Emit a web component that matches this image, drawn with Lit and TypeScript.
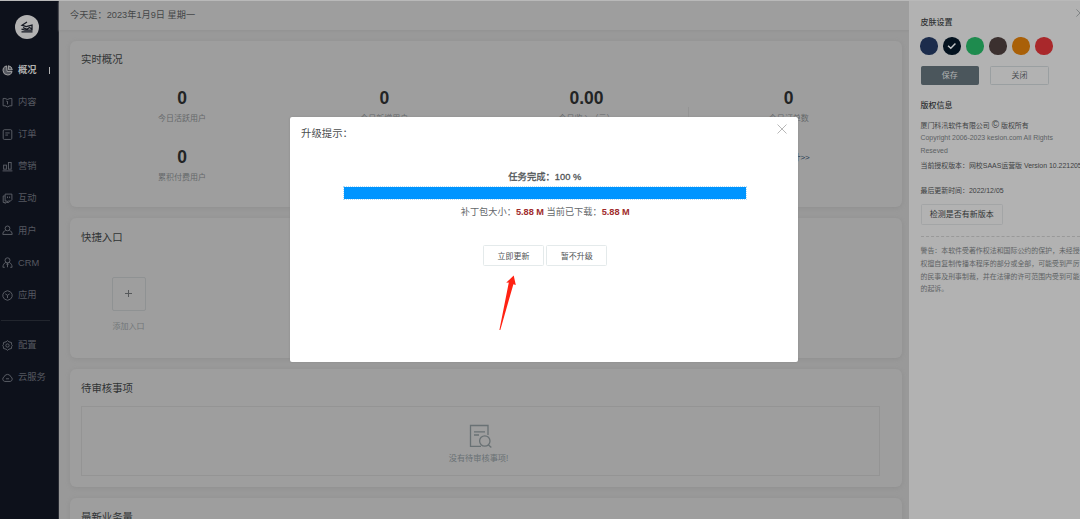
import { LitElement, html, css, svg } from "lit";
import { customElement, property } from "lit/decorators.js";

const icons: Record<string, unknown> = {
  overview: svg`<path d="M5 1A5 5 0 1 0 11 7H5.6Z"/><path d="M7 .8A5 5 0 0 1 11.2 5.2H7Z"/>`,
  content: svg`<path d="M1.2 1.6H3.2L6 2.7 8.8 1.6H10.8V9.6H8.6L6 10.8 3.4 9.6H1.2Z"/><path d="M6 4.6V8M4.6 4.4L6 5"/>`,
  order: svg`<rect x="1.3" y=".8" width="9.4" height="10.6" rx="1.3"/><path d="M3.6 4.3H8.4M3.6 6.6H6.6"/>`,
  sales: svg`<path d="M.6 10.8H11.4"/><rect x="1.8" y="4.5" width="3" height="4.4"/><rect x="7" y="1.6" width="3" height="7.3"/>`,
  chat: svg`<path d="M3.4 1.2H10.8V7.2L9.2 8.8H7L5.8 9.8V8.8H3.4Z"/><path d="M3 3.2H1.3V10.3H3.2V11.4L4.6 10.3H7.4L8.6 9M6 3.8V5.6M8.3 3.8V5.6"/>`,
  user: svg`<circle cx="6" cy="3.7" r="2.6"/><path d="M3.9 5.9C2 6.6.9 8 .9 10.3H11.1C11.1 8 10 6.6 8.1 5.9"/>`,
  crm: svg`<circle cx="6" cy="3.6" r="2.7"/><path d="M4.2 5.8C2.2 6.8 1 8.6 1 11.2H3M7.8 5.8C9.8 6.8 11 8.6 11 11.2H9M6 6.5V11.2M4.6 8L6 6.8 7.4 8"/>`,
  apps: svg`<path d="M6 .8L9.2 2 11 4.6V7.4L9.2 10 6 11.2 2.8 10 1 7.4V4.6L2.8 2Z"/><path d="M3.6 4.2L6 5.8 8.4 4.2M6 5.8V8.8"/>`,
  config: svg`<path d="M6 .7L7.6 2 10.4 2.8V4.8L11.2 6 10.4 7.4V9.2L7.6 10 6 11.3 4.4 10 1.6 9.2V7.4L.8 6 1.6 4.8V2.8L4.4 2Z"/><circle cx="6" cy="6" r="1.8"/>`,
  cloud: svg`<path d="M3 10.3A2.7 2.7 0 0 1 2.4 5.2 3.8 3.8 0 0 1 9.6 5.2 2.7 2.7 0 0 1 9 10.3Z"/><path d="M4.3 7.4H7.7"/>`,
};

@customElement("nav-item")
class NavItem extends LitElement {
  @property() icon = "";
  @property() label = "";
  @property({ type: Boolean, reflect: true }) active = false;
  static styles = css`
    :host { display: flex; align-items: center; height: 32.15px; padding-left: 2px; color: #555860; font-size: 9.3px; }
    svg { width: 11px; height: 11px; margin-right: 5px; fill: none; stroke: #5f626a; stroke-width: 1; }
    span { padding-top: 1px; }
    :host([active]) { color: #b1b1b1; font-weight: 700; }
    :host([active]) svg { stroke: #aaa; fill: #555860; }
    .mark { width: 1px; height: 7px; margin: 0 8px 0 auto; background: #b2b2b2; }
  `;
  render() {
    return html`<svg viewBox="0 0 12 12">${icons[this.icon]}</svg><span>${this.label}</span>${this.active ? html`<i class="mark"></i>` : ""}`;
  }
}

@customElement("app-root")
class AppRoot extends LitElement {
  static styles = css`
    * { box-sizing: border-box; }
    :host { display: flex; box-sizing: border-box; position: relative; width: 1080px; height: 519px; overflow: hidden; border-top: 1px solid #b9b9b9;
      background: #999; color: #3c3f40; font-family: "Liberation Sans", "Noto Sans CJK SC", sans-serif; font-size: 8px; line-height: 1; white-space: nowrap; }
    .side { flex: none; width: 58.5px; background: #0d111b; border-right: 1px solid #292c34; }
    .logo { display: flex; align-items: center; justify-content: center; width: 24px; height: 24px; margin: 14px 0 15px 15px; border-radius: 50%; background: #b2b2b2; }
    .logo svg { width: 14px; height: 12px; fill: none; stroke: #151923; stroke-width: 1.3; }
    .sep { height: 1px; margin: 9px 8px 8px 1px; background: #22262e; }
    .main { flex: none; width: 850.5px; display: flex; flex-direction: column; }
    .top { flex: none; height: 29px; padding: 10px 11.5px; background: #9e9e9e; box-shadow: 0 1px 2px #929292; font-size: 9.2px; color: #454748; }
    .cards { display: flex; flex-direction: column; gap: 11px; padding: 11px 7.5px 0 11px; }
    .card { flex: none; border-radius: 6px; background: #9e9e9e; box-shadow: 0 1px 4px #8f8f8f; padding: 14px 11.5px 0; }
    .card h2 { margin: 0; font-size: 10.4px; font-weight: 400; line-height: 11px; color: #303334; }
    .live { height: 166px; } .live h2 { margin-top: -1px; } .quick { height: 140px; } .audit { height: 118px; } .volume { height: 60px; }
    .stats { display: grid; grid-template-columns: repeat(4, 202.2px); grid-auto-rows: 59px; padding-top: 24.4px; }
    .stat { text-align: center; color: #65686a; }
    .stat b { display: block; font-size: 17.5px; line-height: 18px; margin-bottom: 7.5px; color: #222425; }
    .stat.line { border-left: 1px solid #949494; margin-top: 18px; padding-right: 1px; }
    .stat.line b { margin-top: -18px; }
    .more { color: #24384f; text-align: right; padding: 6px 80px 0 0; }
    .add { width: 34px; margin: 33.5px 0 0 30.5px; text-align: center; color: #727678; }
    .plus { display: flex; align-items: center; justify-content: center; height: 34px; border: 1px solid #8f9293; border-radius: 2px; margin-bottom: 12px; }
    .plus svg { width: 7px; height: 7px; stroke: #55585a; stroke-width: 1; }
    .none { display: flex; flex-direction: column; align-items: center; width: 799px; height: 70px; margin-top: 12px; padding: 16.5px 4px 0 0; border: 1px solid #949494; color: #697174; font-size: 8.2px; }
    .none svg { width: 23px; height: 24px; margin: 0 0 7.5px 4px; fill: none; stroke: #697174; stroke-width: 1.3; }
    .drawer { flex: 1; background: #b2b2b2; padding: 16.5px 0 0 11.5px; overflow: hidden; color: #3e4142; font-size: 6.93px; }
    .drawer h3 { margin: 0; font-size: 8px; font-weight: 500; line-height: 9px; color: #303334; }
    .swatches { display: flex; gap: 5.5px; margin: 10.5px 0 0 -.5px; }
    .dot { width: 17.5px; height: 17.5px; border-radius: 50%; }
    .navy { background: #1c2c4c; } .ink { background: #04121f; } .green { background: #1e8b4e; } .brown { background: #3b302f; } .orange { background: #a96008; } .red { background: #a9282b; }
    .dot svg { display: block; width: 17.5px; height: 17.5px; fill: none; stroke: #c4c7c9; stroke-width: 1.5; }
    .pair { display: flex; gap: 11px; margin: 11.5px 0 16.5px; }
    .btn { display: flex; align-items: center; justify-content: center; width: 58.7px; height: 18.5px; padding-top: 1px; border: 1px solid #9a9fa1; border-radius: 1.5px; font-size: 8px; color: #4c5052; }
    .btn.fill { background: #4b565c; border-color: #4b565c; color: #b2b2b2; }
    .info { line-height: 12.6px; color: #3d4142; }
    .gap { margin-top: 9.5px; } .copy { color: #5c6163; }
    .version { margin-top: 3px; } .updated { margin-top: 12.5px; }
    .circle { font-size: 10px; line-height: 8px; }
    .btn.check { width: 82.5px; height: 21px; margin: 6px 0 11px; color: #303334; border-color: #a3a5a6; }
    .warn { border-top: 1px dashed #999; padding-top: 8.5px; line-height: 12.6px; color: #5e6264; }
    .x { position: absolute; fill: none; stroke: #b8b8b8; stroke-width: 1; }
    .x.dx { left: 1076px; top: 8px; width: 8px; height: 8px; stroke: #74787a; }
    .modal { position: absolute; left: 290px; top: 116px; width: 507.5px; height: 245px; padding: 10.5px 0 0; border-radius: 2px; background: #fff; box-shadow: 0 0 2px #888; color: #63676a; }
    .modal .x { right: 10.5px; top: 6.5px; width: 10px; height: 10px; }
    .title { padding-left: 11px; font-size: 10.4px; line-height: 11px; color: #4b4e50; }
    .done { margin: 33.5px 0 5px; padding-left: 2px; text-align: center; font-size: 9.3px; line-height: 10px; color: #505456; -webkit-text-stroke: .3px #505456; }
    .bar { width: 402px; height: 12px; margin-left: 54px; background: #0095ff; outline: 1px dotted #b5dcf5; outline-offset: -.5px; }
    .size { margin-top: 7.5px; padding-left: 3px; text-align: center; font-size: 9.2px; line-height: 10px; }
    .size b { color: #a02c2c; }
    .acts { display: flex; gap: 2.5px; margin: 28.5px 0 0 193px; }
    .acts .btn { width: 60.8px; height: 21px; padding-top: 2px; border-color: #e4eaeb; color: #505355; }
    .arrow { position: absolute; left: 496px; top: 272px; width: 24px; height: 60px; fill: #ff2213; }
  `;
  render() {
    const nav = [["overview", "概况"], ["content", "内容"], ["order", "订单"], ["sales", "营销"], ["chat", "互动"], ["user", "用户"], ["crm", "CRM"], ["apps", "应用"]];
    const stat = (n: string, label: string, cls = "") => html`<div class="stat ${cls}"><b>${n}</b>${label}</div>`;
    const cross = svg`<path d="M.5 .5L9.5 9.5M9.5 .5L.5 9.5"/>`;
    return html`
      <nav class="side">
        <div class="logo"><svg viewBox="0 0 14 12"><path d="M7 1L2 4.2 6.2 5.6 12 4.2V8L9.5 6.5 7 8.3 3 6.6M1.5 8.2L5 9.2H12.5M1.5 10.8H12.5"/></svg></div>
        ${nav.map(([i, l], k) => html`<nav-item icon=${i} label=${l} ?active=${k === 0}></nav-item>`)}
        <div class="sep"></div>
        <nav-item icon="config" label="配置"></nav-item>
        <nav-item icon="cloud" label="云服务"></nav-item>
      </nav>
      <main class="main">
        <header class="top">今天是：2023年1月9日 星期一</header>
        <div class="cards">
          <section class="card live"><h2>实时概况</h2>
            <div class="stats">
              ${stat("0", "今日活跃用户")}${stat("0", "今日新增用户")}${stat("0.00", "今日收入（元）")}${stat("0", "今日订单数", "line")}
              ${stat("0", "累积付费用户")}<div></div><div></div><div class="more">更多统计&gt;&gt;</div>
            </div>
          </section>
          <section class="card quick"><h2>快捷入口</h2>
            <div class="add"><div class="plus"><svg viewBox="0 0 7 7"><path d="M3.5 0V7M0 3.5H7"/></svg></div>添加入口</div>
          </section>
          <section class="card audit"><h2>待审核事项</h2>
            <div class="none"><svg viewBox="0 0 23 24"><path d="M12 22.3H1.5V1.5H19V11M5 7.8H16M5 11H10"/><circle cx="15.8" cy="17" r="5.2"/><path d="M19.3 20.8L22.3 23.5"/></svg>没有待审核事项!</div>
          </section>
          <section class="card volume"><h2>最新业务量</h2></section>
        </div>
      </main>
      <aside class="drawer">
        <h3>皮肤设置</h3>
        <div class="swatches">
          ${["navy", "ink", "green", "brown", "orange", "red"].map((c) => html`<div class="dot ${c}">${c === "ink" ? html`<svg viewBox="0 0 18 18"><path d="M5.2 9L8 11.6 12.8 6.6"/></svg>` : ""}</div>`)}
        </div>
        <div class="pair"><div class="btn fill">保存</div><div class="btn">关闭</div></div>
        <h3>版权信息</h3>
        <div class="info gap">厦门科汛软件有限公司 <span class="circle">©</span> 版权所有</div>
        <div class="info copy">Copyright 2006-2023 kesion.com All Rights<br>Reseved</div>
        <div class="info version">当前授权版本：网校SAAS运营版 Version 10.221205</div>
        <div class="info updated">最后更新时间：2022/12/05</div>
        <div class="btn check">检测是否有新版本</div>
        <div class="warn">警告：本软件受著作权法和国际公约的保护，未经授<br>权擅自复制传播本程序的部分或全部，可能受到严厉<br>的民事及刑事制裁，并在法律的许可范围内受到可能<br>的起诉。</div>
      </aside>
      <svg class="x dx" viewBox="0 0 10 10">${cross}</svg>
      <div class="modal">
        <div class="title">升级提示：</div>
        <svg class="x" viewBox="0 0 10 10">${cross}</svg>
        <div class="done">任务完成：100 %</div>
        <div class="bar"></div>
        <div class="size">补丁包大小：<b>5.88 M</b> 当前已下载：<b>5.88 M</b></div>
        <div class="acts"><div class="btn">立即更新</div><div class="btn">暂不升级</div></div>
      </div>
      <svg class="arrow" viewBox="496 273 24 60"><path d="M513.7 275.5L515.8 285 513.4 284.2 500.3 330H499.4L508.8 282.6 506.2 282.8Z"/></svg>
    `;
  }
}
